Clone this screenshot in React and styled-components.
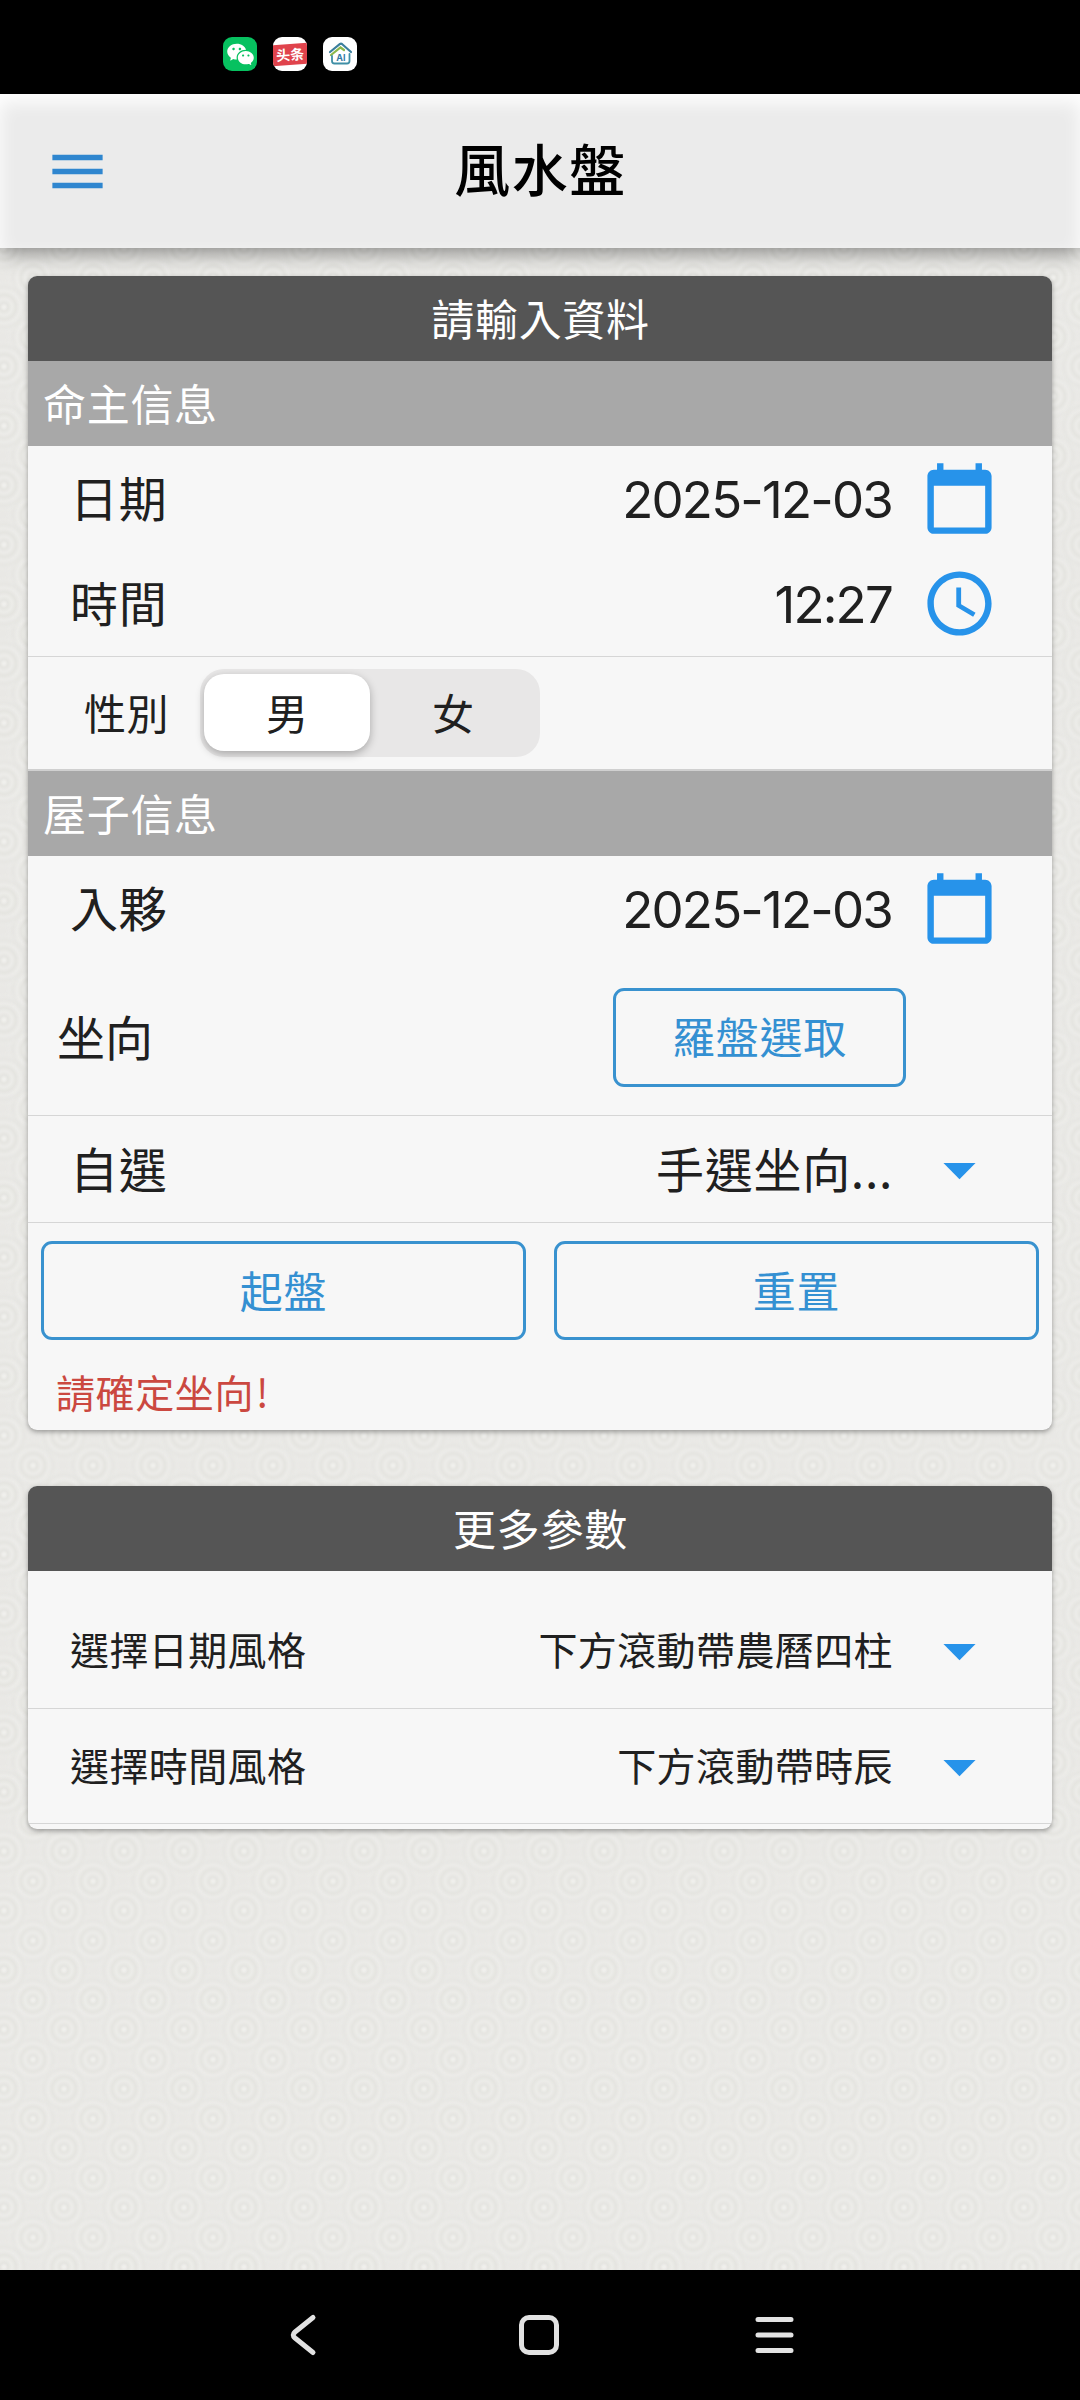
import { useState } from 'react';
import styled, { createGlobalStyle } from 'styled-components';
import { MdMenu, MdCalendarToday, MdSchedule, MdArrowDropDown } from 'react-icons/md';
import { RiWechatFill } from 'react-icons/ri';

const App = () => {
  const [gender, setGender] = useState('男');

  return (
    <Phone>
      <GlobalStyle />
      <StatusBar>
        <AppIcon $bg="#07c160">
          <RiWechatFill size={29} color="#fff" />
        </AppIcon>
        <AppIcon $bg="#fff">
          <Ribbon>头条</Ribbon>
        </AppIcon>
        <AppIcon $bg="#fff">
          <HouseLogo />
        </AppIcon>
      </StatusBar>

      <Header>
        <MenuButton>
          <MdMenu size={67} />
        </MenuButton>
        <h1>風水盤</h1>
      </Header>

      <Content>
        <Card>
          <CardTitle>請輸入資料</CardTitle>
          <SectionTitle>命主信息</SectionTitle>
          <Row $height={105}>
            <Label>日期</Label>
            <DateValue>2025-12-03</DateValue>
            <IconCell><MdCalendarToday size={77} /></IconCell>
          </Row>
          <Row $height={106} $line>
            <Label>時間</Label>
            <DateValue>12:27</DateValue>
            <IconCell><MdSchedule size={77} /></IconCell>
          </Row>
          <GenderRow>
            <Label>性別</Label>
            <Segment>
              {['男', '女'].map(item => (
                <SegmentItem key={item} $active={gender === item} onClick={() => setGender(item)}>
                  {item}
                </SegmentItem>
              ))}
            </Segment>
          </GenderRow>
          <SectionTitle>屋子信息</SectionTitle>
          <Row $height={105}>
            <Label>入夥</Label>
            <DateValue>2025-12-03</DateValue>
            <IconCell><MdCalendarToday size={77} /></IconCell>
          </Row>
          <CompassRow>
            <Label>坐向</Label>
            <OutlineButton $width={293}>羅盤選取</OutlineButton>
          </CompassRow>
          <Row $height={107} $line>
            <Label>自選</Label>
            <Value>手選坐向...</Value>
            <IconCell><MdArrowDropDown size={77} /></IconCell>
          </Row>
          <Buttons>
            <OutlineButton>起盤</OutlineButton>
            <OutlineButton>重置</OutlineButton>
          </Buttons>
          <ErrorText>請確定坐向<Mark>!</Mark></ErrorText>
        </Card>

        <Card>
          <CardTitle>更多參數</CardTitle>
          <Options>
            <Row $height={116} $line $small>
              <Label>選擇日期風格</Label>
              <Value>下方滾動帶農曆四柱</Value>
              <IconCell><MdArrowDropDown size={77} /></IconCell>
            </Row>
            <Row $height={115} $line $small>
              <Label>選擇時間風格</Label>
              <Value>下方滾動帶時辰</Value>
              <IconCell><MdArrowDropDown size={77} /></IconCell>
            </Row>
          </Options>
        </Card>
      </Content>

      <NavBar>
        <svg width="40" height="50" viewBox="0 0 40 50">
          <path d="M27 7.500 L9 22 Q5.500 25 9 28 L27 42.500" />
        </svg>
        <svg width="50" height="50" viewBox="0 0 50 50">
          <rect x="7.500" y="7.500" width="35" height="35" rx="7.500" />
        </svg>
        <svg width="50" height="50" viewBox="0 0 50 50">
          <path d="M8 9.500 H41 M8 25 H41 M8 40.500 H41" />
        </svg>
      </NavBar>
    </Phone>
  );
}

const HouseLogo = () => (
  <svg width="34" height="34" viewBox="0 0 34 34" fill="none" strokeLinecap="round">
    <path d="M7 15 L17 7 Q18 6.300 19 7 L28 15" stroke="#3b7f9d" strokeWidth="2.200" />
    <path d="M8 18 L17.500 10.500 L21 13" stroke="#8bb84a" strokeWidth="2.200" />
    <path d="M9 19 V24 Q9 26.500 11.500 26.500 H24 Q26.500 26.500 26.500 24 V17" stroke="#3f8fa6" strokeWidth="1.800" />
    <text x="17.800" y="23.500" textAnchor="middle" fontSize="9" fontWeight="700" fontFamily="Inter, sans-serif" fill="#3379a5">AI</text>
  </svg>
);

export default App;

const GlobalStyle = createGlobalStyle`
* {
  box-sizing: border-box;
}
body {
  margin: 0;
  background-color: #000;
  font-family: "Noto Sans CJK TC", sans-serif;
  color: #202020;
}
svg {
  display: block;
}
button {
  font-family: inherit;
  padding: 0;
  border: none;
  background: none;
}
`

const Phone = styled.div`
  width: 1080px;
  height: 2400px;
  display: flex;
  flex-direction: column;
  overflow: hidden;
`

const StatusBar = styled.div`
  flex: none;
  height: 94px;
  padding: 37px 0 0 223px;
  display: flex;
  gap: 16px;
`

const AppIcon = styled.div`
  width: 34px;
  height: 34px;
  border-radius: 9px;
  overflow: hidden;
  display: flex;
  align-items: center;
  justify-content: center;
  background-color: ${props => props.$bg};
`

const Ribbon = styled.span`
  flex: none;
  width: 38px;
  height: 21px;
  line-height: 20px;
  text-align: center;
  font-family: "Noto Sans CJK SC", sans-serif;
  font-size: 14px;
  font-weight: 700;
  color: #fff;
  background-color: #e0434c;
  transform: rotate(-4deg);
`

const Header = styled.header`
  flex: none;
  height: 154px;
  display: grid;
  grid-template-columns: 154px 1fr 154px;
  align-items: center;
  background-color: #ebebeb;
  box-shadow: inset 0 8px 18px #fff, 0 4px 20px rgba(0, 0, 0, 0.45);
  clip-path: inset(0 0 -30px 0);
  z-index: 1;

  h1 {
    margin: 0;
    padding: 0 0 9px 1px;
    text-align: center;
    font-size: 56px;
    line-height: 60px;
    font-weight: 500;
    letter-spacing: 1.500px;
    color: #000;
  }
`

const MenuButton = styled.button`
  display: flex;
  justify-content: center;
  color: #2f86cf;
`

/* faint rings, the second layer is shifted by half a tile */
const rings = `
  rgba(243, 243, 240, 0.7) 0,
  rgba(243, 243, 240, 0.7) 1px,
  rgba(226, 226, 221, 0.55) 4px,
  rgba(239, 239, 236, 0.55) 8px,
  rgba(226, 226, 221, 0.55) 12px,
  rgba(239, 239, 236, 0.5) 16px,
  rgba(228, 228, 224, 0.4) 20px,
  rgba(236, 236, 233, 0.3) 24px,
  rgba(232, 232, 228, 0) 28px
`

const Content = styled.main`
  flex: 1;
  padding: 28px 28px 0;
  display: flex;
  flex-direction: column;
  gap: 56px;
  background-color: #e9e8e5;
  background-image: radial-gradient(circle, ${rings}), radial-gradient(circle, ${rings});
  background-size: 60px 59.400px;
  background-position: -26px -30px, 3px 0;
`

const Card = styled.section`
  border-radius: 9px;
  overflow: hidden;
  background-color: #f7f7f7;
  box-shadow: 0 2px 5px rgba(0, 0, 0, 0.35);
`

const CardTitle = styled.div`
  height: 85px;
  line-height: 82px;
  padding-left: 1px;
  text-align: center;
  font-size: 43px;
  letter-spacing: 0.700px;
  color: #fff;
  background-color: #555;
`

const SectionTitle = styled.div`
  height: 85px;
  line-height: 82px;
  padding-left: 15px;
  font-size: 43px;
  letter-spacing: 0.700px;
  color: #fff;
  background-color: #a8a8a8;
`

const Row = styled.div`
  height: ${props => props.$height}px;
  padding: 0 54px 0 42px;
  display: flex;
  align-items: center;
  font-size: ${props => (props.$small ? 39 : 48)}px;
  letter-spacing: ${props => (props.$small ? 0.4 : 0.7)}px;
  border-bottom: ${props => (props.$line ? '1px solid #d6d6d6' : 'none')};
`

const Label = styled.span`
  flex: 1;
  padding-bottom: 5px;
`

const Value = styled.span`
  margin-right: 28px;
  padding-bottom: 5px;
`

const DateValue = styled.span`
  margin-right: 29px;
  padding-top: 1px;
  font-family: Inter, sans-serif;
  font-size: 51px;
  letter-spacing: -1.800px;
`

const IconCell = styled.span`
  color: #2793ea;
`

const GenderRow = styled.div`
  height: 114px;
  padding-left: 56px;
  display: flex;
  align-items: center;
  font-size: 42px;
  letter-spacing: 0.500px;
  border-bottom: 2px solid #d0d0d0;

  ${Label} {
    flex: none;
    padding-bottom: 3px;
  }
`

const Segment = styled.div`
  width: 340px;
  height: 88px;
  margin-left: 31px;
  padding: 5px 4px 6px;
  display: flex;
  border-radius: 24px;
  background-color: #e8e7e7;
`

const SegmentItem = styled.button`
  flex: 1;
  padding-bottom: 3px;
  border-radius: 20px;
  font-size: 42px;
  color: #202020;
  background-color: ${props => (props.$active ? '#fff' : 'transparent')};
  box-shadow: ${props => (props.$active ? '0 3px 8px rgba(0, 0, 0, 0.28)' : 'none')};
`

const CompassRow = styled.div`
  height: 155px;
  padding: 0 146px 2px 29px;
  display: flex;
  align-items: center;
  font-size: 48px;
  border-bottom: 1px solid #d6d6d6;
`

const OutlineButton = styled.button`
  flex: ${props => (props.$width ? 'none' : 1)};
  width: ${props => (props.$width ? `${props.$width}px` : 'auto')};
  height: 99px;
  padding-bottom: 4px;
  border: 3px solid #3992cf;
  border-radius: 11px;
  font-size: 43px;
  letter-spacing: 0.700px;
  color: #3490d2;
`

const Buttons = styled.div`
  display: flex;
  gap: 28px;
  padding: 18px 13px 0;
`

const ErrorText = styled.div`
  height: 90px;
  padding: 22px 0 0 28px;
  font-size: 39px;
  line-height: 58px;
  letter-spacing: 0.600px;
  color: #cb4840;
`

const Mark = styled.span`
  margin-left: 2px;
`

const Options = styled.div`
  padding: 22px 0 5px;
`

const NavBar = styled.nav`
  flex: none;
  height: 130px;
  padding: 40px 0 0 286px;
  display: flex;
  align-items: flex-start;
  background-color: #000;

  svg {
    fill: none;
    stroke: #e2e2e2;
    stroke-width: 5;
    stroke-linecap: round;
    stroke-linejoin: round;
  }
  svg:nth-child(2) {
    margin-left: 188px;
  }
  svg:nth-child(3) {
    margin-left: 186px;
  }
`
